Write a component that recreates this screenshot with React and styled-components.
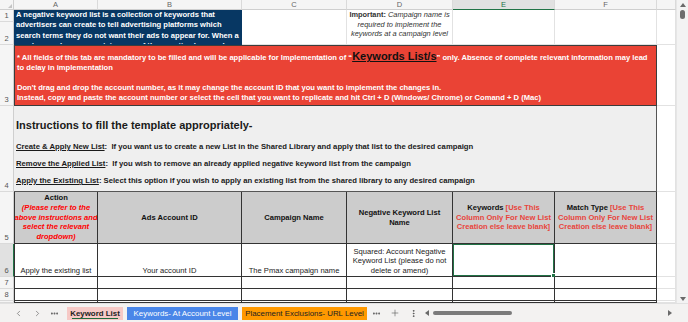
import React from 'react';
import styled, {createGlobalStyle} from 'styled-components';
import {ChevronLeft, ChevronRight, Ellipsis, EllipsisVertical, Plus} from 'lucide-react';

const GlobalStyle = createGlobalStyle`
  html, body {
    margin: 0;
    padding: 0;
    background: #ffffff;
  }
  body {
    font-family: 'Liberation Sans', Arial, sans-serif;
    overflow: hidden;
  }
`;

const COLS = ['A', 'B', 'C', 'D', 'E', 'F'];

function Sheet() {
  return (
    <Grid>
      <Corner />
      {COLS.map((c, i) => (
        <ColHead key={c} $c={i + 2} $active={c === 'E'}>
          {c}
        </ColHead>
      ))}
      <ColHead $c={8} />

      <RowHead $r={2}>1</RowHead>
      <RowHead $r={3}>2</RowHead>
      <RowHead $r={4}>3</RowHead>
      <RowHead $r={5}>4</RowHead>
      <RowHead $r={6}>5</RowHead>
      <RowHead $r={7} $active>6</RowHead>
      <RowHead $r={8}>7</RowHead>
      <RowHead $r={9}>8</RowHead>
      <RowHead $r={10} />

      <BlueNote $c={2} $cs={2} $r={2} $rs={2}>
        A negative keyword list is a collection of keywords that
        <br />
        advertisers can create to tell advertising platforms which
        <br />
        search terms they do not want their ads to appear for. When a
        <br />
        user's search query contains any of the negative keywords on
      </BlueNote>
      <Cell $c={4} $r={2} $rs={2} />
      <ImportantNote $c={5} $r={2} $rs={2}>
        <b>Important:</b> Campaign name is
        <br />
        required to implement the
        <br />
        keywords at a campaign level
      </ImportantNote>
      <Cell $c={6} $r={2} $rs={2} />
      <Cell $c={7} $r={2} $rs={2} />
      <Cell $c={8} $r={2} $rs={2} />

      <RedNote $c={2} $cs={6} $r={4}>
        <RedLine>
          * All fields of this tab are mandatory to be filled and will be applicable for
          Implementation of “<BigLink>Keywords List/s</BigLink>” only. Absence of complete
          relevant information may lead
        </RedLine>
        <RedLine>to delay in implementation</RedLine>
        <RedLine>&nbsp;</RedLine>
        <RedLine>
          Don't drag and drop the account number, as it may change the account ID that you
          want to implement the changes in.
        </RedLine>
        <RedLine>
          Instead, copy and paste the account number or select the cell that you want to
          replicate and hit Ctrl + D (Windows/ Chrome) or Comand + D (Mac)
        </RedLine>
      </RedNote>
      <Cell $c={8} $r={4} />

      <Instructions $c={2} $cs={6} $r={5}>
        <Title>Instructions to fill the template appropriately-</Title>
        <Step>
          <u>Create &amp; Apply New List</u>:&nbsp; If you want us to create a new List in the
          Shared Library and apply that list to the desired campaign
        </Step>
        <Step>
          <u>Remove the Applied List</u>:&nbsp; If you wish to remove an already applied
          negative keyword list from the campaign
        </Step>
        <Step>
          <u>Apply the Existing List</u>: Select this option if you wish to apply an existing
          list from the shared library to any desired campaign
        </Step>
      </Instructions>
      <Cell $c={8} $r={5} />

      <HeadCell $c={2} $r={6} $first>
        Action
        <Warn>
          (Please refer to the
          <br />
          above instructions and
          <br />
          select the relevant
          <br />
          dropdown)
        </Warn>
      </HeadCell>
      <HeadCell $c={3} $r={6}>Ads Account ID</HeadCell>
      <HeadCell $c={4} $r={6}>Campaign Name</HeadCell>
      <HeadCell $c={5} $r={6}>
        Negative Keyword List
        <br />
        Name
      </HeadCell>
      <HeadCell $c={6} $r={6}>
        <span>
          Keywords <Hint>[Use This</Hint>
        </span>
        <Hint>
          Column Only For New List
          <br />
          Creation else leave blank]
        </Hint>
      </HeadCell>
      <HeadCell $c={7} $r={6}>
        <span>
          Match Type <Hint>[Use This</Hint>
        </span>
        <Hint>
          Column Only For New List
          <br />
          Creation else leave blank]
        </Hint>
      </HeadCell>
      <Cell $c={8} $r={6} />

      <ValueCell $c={2} $r={7} $first>Apply the existing list</ValueCell>
      <ValueCell $c={3} $r={7}>Your account ID</ValueCell>
      <ValueCell $c={4} $r={7}>The Pmax campaign name</ValueCell>
      <ValueCell $c={5} $r={7}>
        Squared: Account Negative
        <br />
        Keyword List (please do not
        <br />
        delete or amend)
      </ValueCell>
      <ValueCell $c={6} $r={7} $selected />
      <ValueCell $c={7} $r={7} />
      <Cell $c={8} $r={7} />

      {[8, 9, 10].map((r) => (
        <React.Fragment key={r}>
          {COLS.map((c, i) => (
            <ValueCell key={c} $c={i + 2} $r={r} $first={i === 0} />
          ))}
          <Cell $c={8} $r={r} />
        </React.Fragment>
      ))}
    </Grid>
  );
}

function VScroll() {
  return (
    <VTrack>
      <Arrow viewBox="0 0 6 4" width="6" height="4">
        <polygon points="3,0 6,4 0,4" />
      </Arrow>
      <VThumb />
      <Spacer />
      <Arrow viewBox="0 0 6 4" width="6" height="4">
        <polygon points="0,0 6,0 3,4" />
      </Arrow>
    </VTrack>
  );
}

function TabBar() {
  return (
    <Bar>
      <NavBtn>
        <ChevronLeft size={9} strokeWidth={1.6} />
      </NavBtn>
      <NavBtn>
        <ChevronRight size={9} strokeWidth={1.6} />
      </NavBtn>
      <MoreBtn $w={14}>
        <Ellipsis size={9} strokeWidth={3} />
      </MoreBtn>
      <Tabs>
        <Tab $bg="#f6c9c6" $w={56} $active>
          Keyword List
        </Tab>
        <Tab $bg="#4a86e8" $color="#ffffff" $w={111}>
          Keywords- At Account Level
        </Tab>
        <Tab $bg="#ff9900" $w={125}>
          Placement Exclusions- URL Level
        </Tab>
      </Tabs>
      <MoreBtn $w={18}>
        <Ellipsis size={9} strokeWidth={3} />
      </MoreBtn>
      <MoreBtn $w={20}>
        <Plus size={10} strokeWidth={1.4} />
      </MoreBtn>
      <MoreBtn $w={16}>
        <EllipsisVertical size={9} strokeWidth={2.6} />
      </MoreBtn>
      <HTrack>
        <Arrow viewBox="0 0 4 6" width="4" height="6">
          <polygon points="4,0 4,6 0,3" />
        </Arrow>
        <HThumb />
        <Spacer />
        <Arrow viewBox="0 0 4 6" width="4" height="6">
          <polygon points="0,0 4,3 0,6" />
        </Arrow>
      </HTrack>
    </Bar>
  );
}

export default function App() {
  return (
    <>
      <GlobalStyle />
      <Window>
        <Sheet />
        <VScroll />
        <TabBar />
      </Window>
    </>
  );
}

const Window = styled.div`
  width: 688px;
  height: 322px;
  display: grid;
  grid-template-columns: 676px 12px;
  grid-template-rows: 303px 19px;
  overflow: hidden;
`;

const Grid = styled.div`
  display: grid;
  grid-template-columns: 14px 84px 144px 105px 106px 102px 102px 19px;
  grid-template-rows: 10px 12px 23px 61px 86px 52px 33px 12px 12px 2px;
  overflow: hidden;
  background: #ffffff;
`;

const Corner = styled.div`
  grid-column: 1;
  grid-row: 1;
  position: relative;
  background: #f5f5f5;
  border-right: 1px solid #cfcfcf;
  border-bottom: 1px solid #cfcfcf;

  &::after {
    content: '';
    position: absolute;
    right: 1px;
    bottom: 1px;
    border-left: 4px solid transparent;
    border-bottom: 4px solid #c4c4c4;
  }
`;

const ColHead = styled.div`
  grid-column: ${(p) => p.$c};
  grid-row: 1;
  box-sizing: border-box;
  display: flex;
  align-items: center;
  justify-content: center;
  background: ${(p) => (p.$active ? '#e1e1e1' : '#f5f5f5')};
  border-right: 1px solid #dadada;
  border-bottom: 1px solid ${(p) => (p.$active ? '#217346' : '#cfcfcf')};
  color: ${(p) => (p.$active ? '#217346' : '#666666')};
  font-size: 7.5px;
`;

const RowHead = styled.div`
  grid-column: 1;
  grid-row: ${(p) => p.$r};
  box-sizing: border-box;
  display: flex;
  align-items: flex-end;
  justify-content: center;
  padding-bottom: 1px;
  background: ${(p) => (p.$active ? '#e1e1e1' : '#f5f5f5')};
  border-right: 1px solid ${(p) => (p.$active ? '#217346' : '#cfcfcf')};
  border-bottom: 1px solid #dadada;
  color: #555555;
  font-size: 7.5px;
  line-height: 9px;
  overflow: hidden;
`;

const Cell = styled.div`
  grid-column: ${(p) => p.$c} / span ${(p) => p.$cs || 1};
  grid-row: ${(p) => p.$r} / span ${(p) => p.$rs || 1};
  box-sizing: border-box;
  min-width: 0;
  min-height: 0;
  overflow: hidden;
  border-right: 1px solid #e2e2e2;
  border-bottom: 1px solid #e2e2e2;
`;

const BlueNote = styled(Cell)`
  background: #073763;
  color: #ffffff;
  font-weight: bold;
  font-size: 7.6px;
  line-height: 10.4px;
  padding: 0 2px;
  white-space: nowrap;
  border-color: #073763;
`;

const ImportantNote = styled(Cell)`
  color: #333333;
  font-style: italic;
  font-size: 7.4px;
  line-height: 9.7px;
  text-align: center;
  white-space: nowrap;

  b {
    font-style: normal;
  }
`;

const RedNote = styled(Cell)`
  background: #ea4335;
  border: 1px solid #3c3c3c;
  color: #ffffff;
  font-weight: bold;
  font-size: 7.6px;
  padding: 5px 2px 0;
`;

const RedLine = styled.div`
  line-height: 10px;
  white-space: nowrap;
`;

const BigLink = styled.span`
  color: #111111;
  font-size: 11px;
  text-decoration: underline;
`;

const Instructions = styled(Cell)`
  background: #efefef;
  border-right: 1px solid #555555;
  border-bottom: 1px solid #555555;
  padding: 12px 2px 0;
  color: #1a1a1a;
  font-weight: bold;
  font-size: 7.7px;
`;

const Title = styled.div`
  font-size: 11px;
  line-height: 14px;
  margin-bottom: 6px;
`;

const Step = styled.div`
  line-height: 17px;
  white-space: nowrap;
`;

const HeadCell = styled(Cell)`
  display: flex;
  flex-direction: column;
  align-items: center;
  justify-content: center;
  text-align: center;
  background: #cccccc;
  border-right: 1px solid #333333;
  border-bottom: 1px solid #333333;
  border-left: ${(p) => (p.$first ? '1px solid #333333' : 'none')};
  color: #111111;
  font-weight: bold;
  font-size: 7.6px;
  line-height: 9.7px;
  white-space: nowrap;
`;

const Warn = styled.span`
  color: #ff0000;
  font-style: italic;
`;

const Hint = styled.span`
  color: #e8453c;
`;

const ValueCell = styled(Cell)`
  position: relative;
  display: flex;
  flex-direction: column;
  align-items: center;
  justify-content: flex-end;
  text-align: center;
  padding-bottom: 1px;
  border-right: 1px solid #333333;
  border-bottom: 1px solid #333333;
  border-left: ${(p) => (p.$first ? '1px solid #333333' : 'none')};
  box-shadow: ${(p) => (p.$selected ? 'inset 0 0 0 1px #217346' : 'none')};
  overflow: visible;
  color: #222222;
  font-size: 7.6px;
  line-height: 9.5px;
  white-space: nowrap;

  &::after {
    content: '';
    display: ${(p) => (p.$selected ? 'block' : 'none')};
    position: absolute;
    right: -2px;
    bottom: -2px;
    width: 3px;
    height: 3px;
    background: #217346;
    border: 1px solid #ffffff;
  }
`;

const VTrack = styled.div`
  grid-column: 2;
  grid-row: 1;
  display: flex;
  flex-direction: column;
  align-items: center;
  padding: 3px 0 2px;
  background: #f3f3f3;
  border-left: 1px solid #e6e6e6;
`;

const Arrow = styled.svg`
  fill: #6a6a6a;
  flex: none;
`;

const VThumb = styled.div`
  width: 5px;
  height: 9px;
  margin-top: 3px;
  border-radius: 3px;
  background: #6e6e6e;
`;

const Spacer = styled.div`
  flex: 1;
`;

const Bar = styled.div`
  grid-column: 1 / span 2;
  grid-row: 2;
  display: flex;
  align-items: center;
  padding-left: 9px;
  background: #f3f2f1;
  border-top: 1px solid #e1e1e1;
  font-size: 7.9px;
  color: #333333;
`;

const NavBtn = styled.div`
  width: 19px;
  display: flex;
  justify-content: center;
  color: #555555;
`;

const MoreBtn = styled.div`
  width: ${(p) => p.$w}px;
  display: flex;
  justify-content: center;
  color: #555555;
`;

const Tabs = styled.div`
  display: flex;
  gap: 4px;
  margin-left: 6px;
`;

const Tab = styled.div`
  position: relative;
  width: ${(p) => p.$w}px;
  height: 13px;
  box-sizing: border-box;
  display: flex;
  align-items: center;
  justify-content: center;
  background: ${(p) => p.$bg};
  color: ${(p) => p.$color || '#222222'};
  font-weight: ${(p) => (p.$active ? 600 : 'normal')};
  white-space: nowrap;
  overflow: hidden;

  &::after {
    content: '';
    display: ${(p) => (p.$active ? 'block' : 'none')};
    position: absolute;
    left: 5px;
    right: 5px;
    bottom: 1px;
    height: 1px;
    background: #1e6b3e;
  }
`;

const HTrack = styled.div`
  flex: 1;
  display: flex;
  align-items: center;
  padding: 0 16px 0 4px;
`;

const HThumb = styled.div`
  width: 79px;
  height: 4px;
  margin-left: 4px;
  border-radius: 2px;
  background: #7b7b7b;
`;
